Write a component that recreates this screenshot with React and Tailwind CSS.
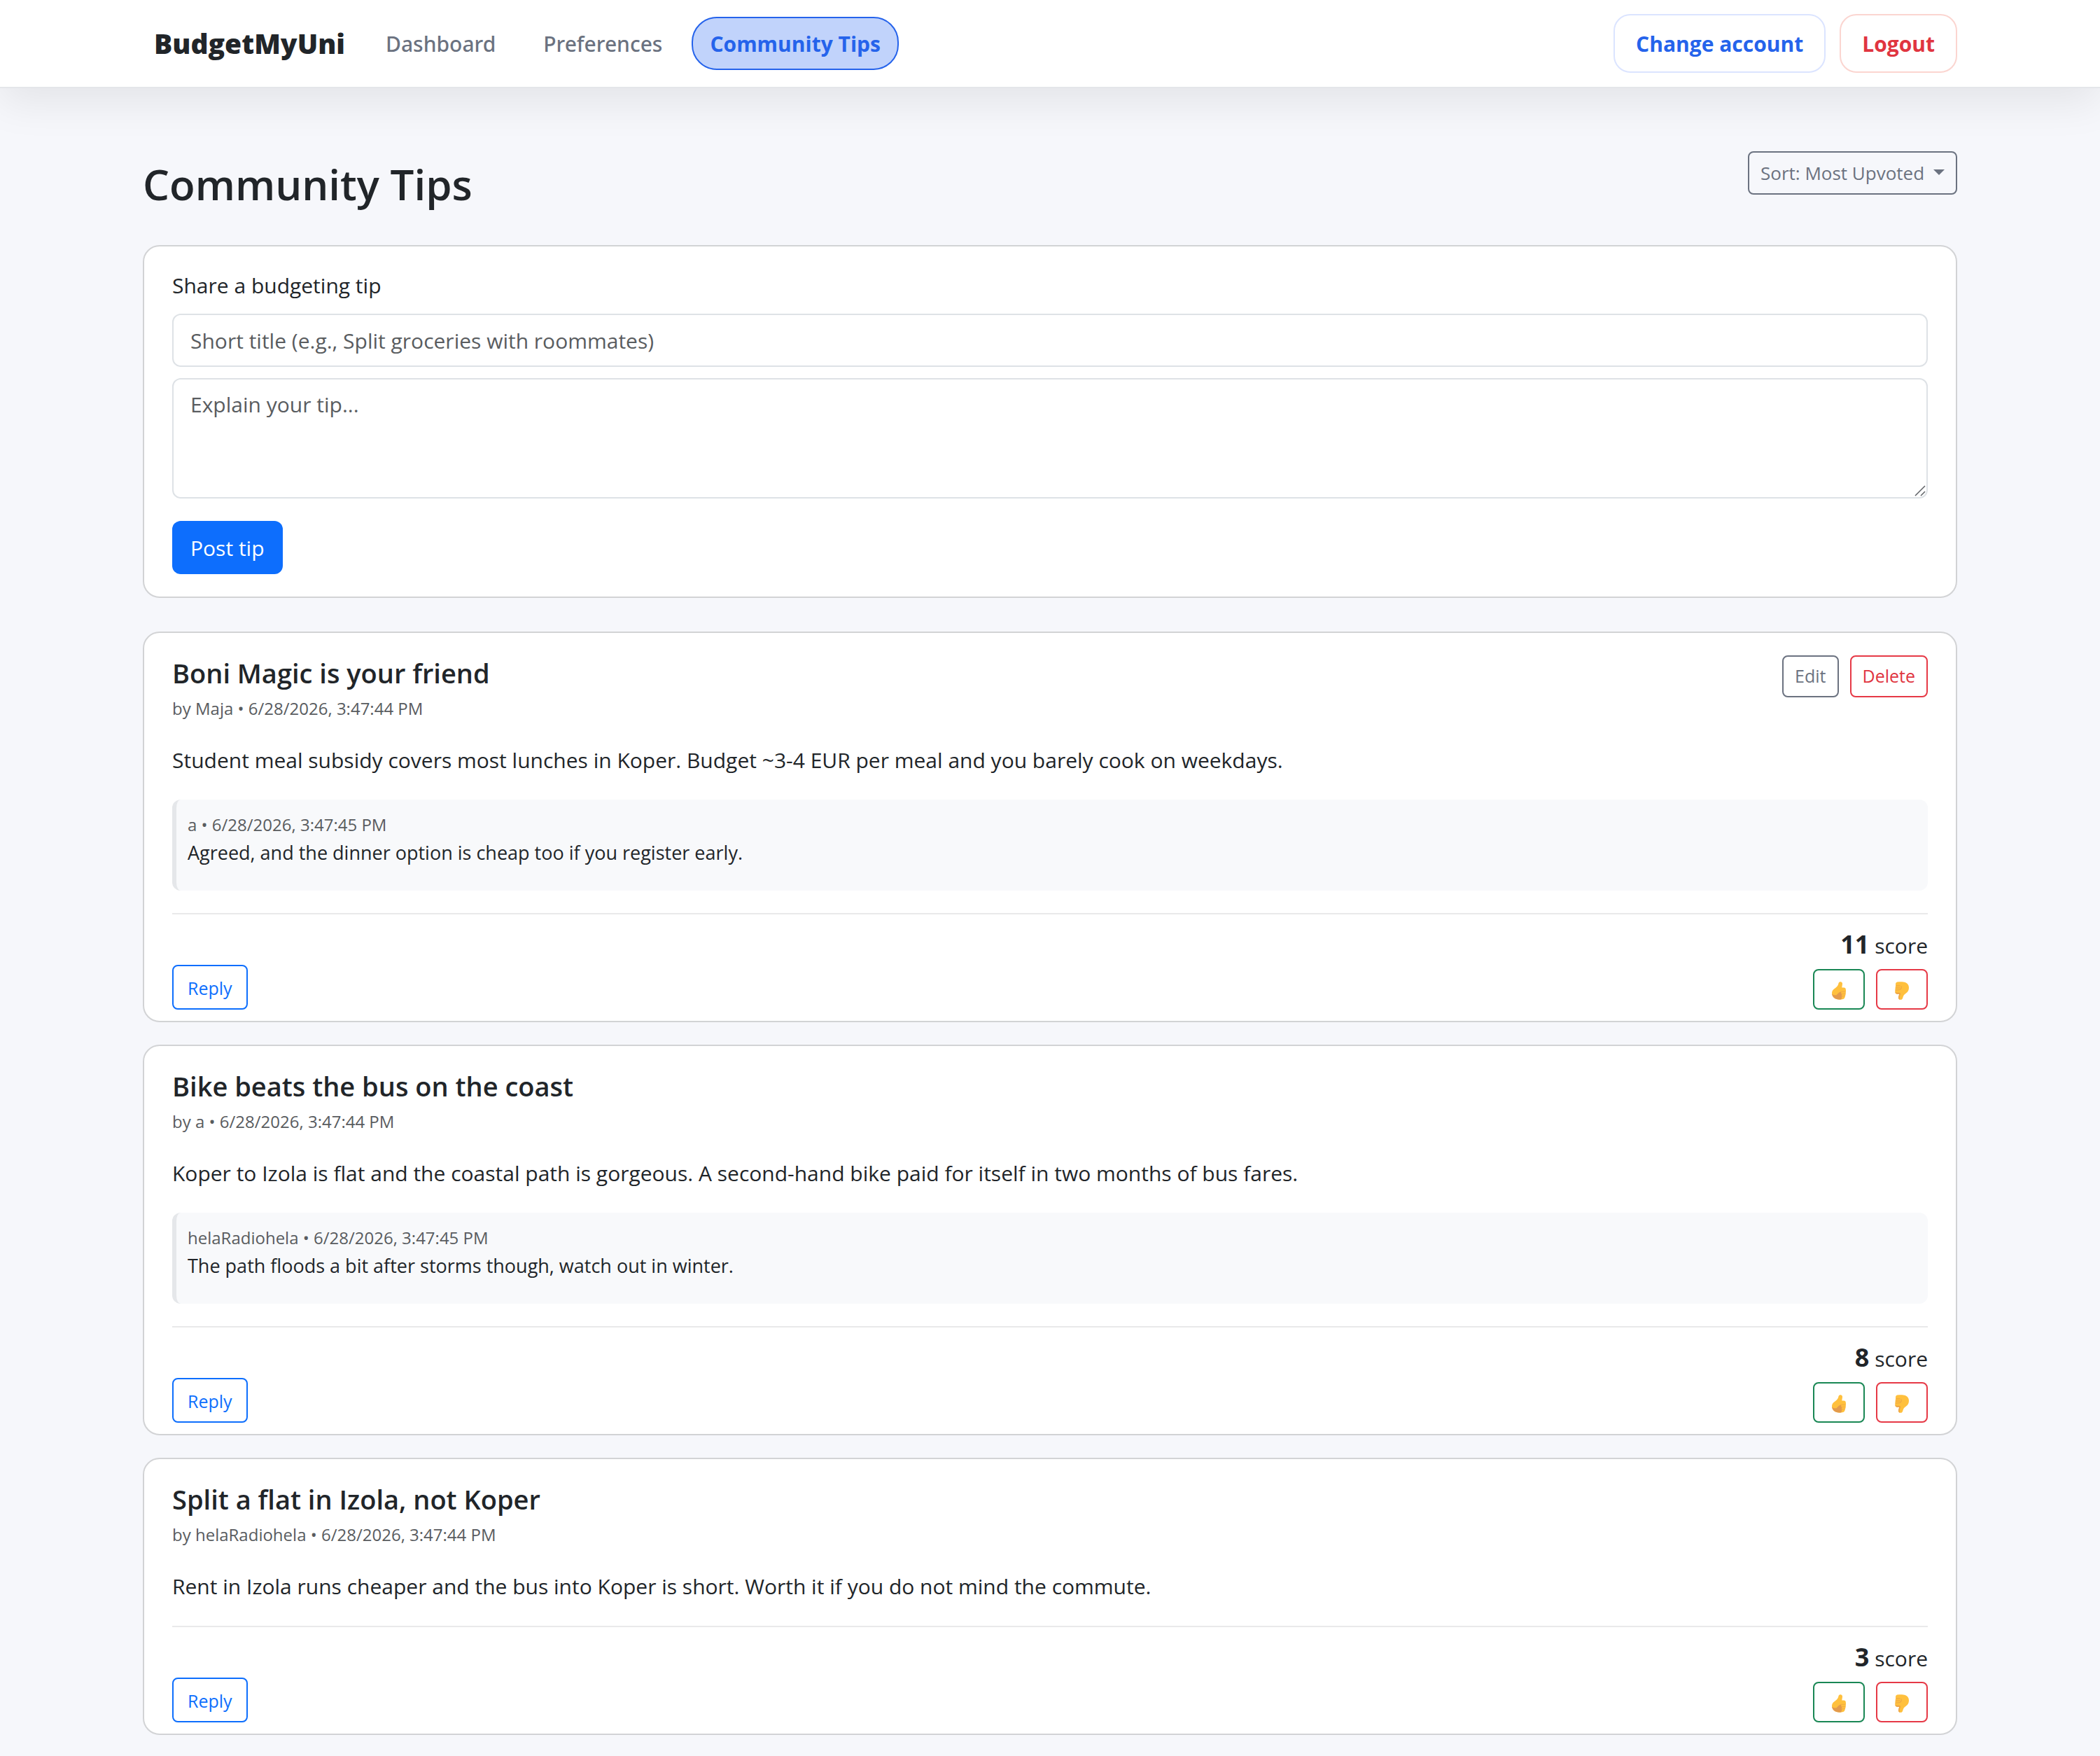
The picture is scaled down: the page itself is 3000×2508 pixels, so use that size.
import React, { useState } from 'react';

const NAV_LINKS = [
  { label: 'Dashboard', active: false },
  { label: 'Preferences', active: false },
  { label: 'Community Tips', active: true },
];

const TIPS = [
  {
    id: 1,
    title: 'Boni Magic is your friend',
    author: 'Maja',
    date: '6/28/2026, 3:47:44 PM',
    body: 'Student meal subsidy covers most lunches in Koper. Budget ~3-4 EUR per meal and you barely cook on weekdays.',
    score: 11,
    own: true,
    replies: [
      { author: 'a', date: '6/28/2026, 3:47:45 PM', text: 'Agreed, and the dinner option is cheap too if you register early.' },
    ],
  },
  {
    id: 2,
    title: 'Bike beats the bus on the coast',
    author: 'a',
    date: '6/28/2026, 3:47:44 PM',
    body: 'Koper to Izola is flat and the coastal path is gorgeous. A second-hand bike paid for itself in two months of bus fares.',
    score: 8,
    own: false,
    replies: [
      { author: 'helaRadiohela', date: '6/28/2026, 3:47:45 PM', text: 'The path floods a bit after storms though, watch out in winter.' },
    ],
  },
  {
    id: 3,
    title: 'Split a flat in Izola, not Koper',
    author: 'helaRadiohela',
    date: '6/28/2026, 3:47:44 PM',
    body: 'Rent in Izola runs cheaper and the bus into Koper is short. Worth it if you do not mind the commute.',
    score: 3,
    own: false,
    replies: [],
  },
];

const card = 'rounded-3xl border-2 border-[#d2d3d5] bg-white px-10';
const field = 'block w-full rounded-xl border-2 border-[#dee2e6] bg-white px-6 leading-[48px] text-[#212529] placeholder:text-[#595c5f]';

function ThumbUp() {
  return (
    <svg viewBox="0 0 20 26" className="h-[26px] w-5" aria-hidden="true">
      <path
        d="M11 .6C12.6-.3 15 .6 15 3c0 2-.8 4-.6 5.600H17c1.900 0 3 1.200 2.800 2.800.3 1 .3 2-.1 3 .3 1 .3 2.100-.2 3 .2 1.100 0 2.200-.7 3 0 2.600-1.200 4.600-3.800 4.900-3.300.6-7.700.5-10.300-1C1.800 22.700 0 20 0 16.600c0-3.100 1.400-5 3.800-6.700C6.500 8 8.600 6 9.300 3.200 9.500 2 10 1.100 11 .6Z"
        fill="#ffc03d"
      />
      <path
        d="M.1 17.500C1.500 19 4 19.500 6.500 19.300c1.500-1.600 3.200-3.700 5.300-4.600 1.400-.2 2 .8 1.400 2 1.300.7 1.500 2 .7 3 .9.900.8 2.200-.1 2.900.5.9.2 2-.7 2.600 1.100.2-1.600.3-3.300.2C4.700 25.200.8 22.500.1 17.500Z"
        fill="#e39a4c"
      />
      <path d="M12.500 14.400h6.600M13.400 17.500h5.600M13.400 20.600h5" stroke="#f0a648" strokeWidth="0.8" strokeLinecap="round" />
    </svg>
  );
}

function ThumbDown() {
  return (
    <svg viewBox="0 0 20 26" className="h-[26px] w-5" aria-hidden="true">
      <path
        d="M3.200.6C7 0 12 0 15.200 1.200 18.400 2.500 20 5.300 20 8.700c0 3.700-1.600 6-4.300 8-2.400 1.700-3.700 3.200-4.400 6.200-.4 1.800-1.300 2.900-2.900 2.900-2.100 0-3.600-1.300-3.400-3.400.2-1.700 1-3 1.100-4.700H3.300C1.500 17.700.3 16.600.4 15c-.3-1-.3-2.100.1-3-.3-1.100-.2-2.200.3-3-.3-1.100-.1-2.300.5-3.100C.6 3.500 1 1.300 3.200.6Z"
        fill="#ffc03d"
      />
      <path
        d="M1.100 12.100c2.300-.4 5.300.3 7.300-1.300M1.300 9h6M1.600 5.900h5.500M9 6.500c.8 1.500.6 3.200-.6 4.300"
        fill="none"
        stroke="#e8a04a"
        strokeWidth="0.9"
        strokeLinecap="round"
      />
      <path d="M.5 14.800c1.700 1.300 4.600.8 7.300 1.400.6 1.700-.6 3.600-1.100 5.600-.2 1.600 0 2.800.7 3.900-1.600-.3-2.600-1.500-2.400-3.300.2-1.700 1-3 1.100-4.700H3.300c-1.700 0-2.900-1.200-2.800-2.900Z" fill="#eca347" />
    </svg>
  );
}

function Navbar() {
  return (
    <header className="relative z-10 border-b-2 border-[#e4e6ea] bg-white shadow-[0_20px_60px_rgba(0,0,0,0.08)]">
      <div className="mx-auto flex h-[124px] max-w-[2592px] items-center">
        <a href="#" className="ml-4 mr-8 text-[39px] font-extrabold">BudgetMyUni</a>
        <nav className="flex gap-4 text-[30px]">
          {NAV_LINKS.map(link => (
            <a
              key={link.label}
              href="#"
              aria-current={link.active ? 'page' : undefined}
              className={
                link.active
                  ? 'flex h-[76px] items-center rounded-[36px] border-2 border-[#2563eb] bg-[#c1d3fb] px-6 font-bold text-[#2563eb]'
                  : 'flex h-[76px] items-center rounded-[36px] border-2 border-transparent px-6 font-["Noto_Sans",sans-serif] font-medium text-[#6b7280]'
              }
            >
              {link.label}
            </a>
          ))}
        </nav>
        <div className="ml-auto flex gap-5 text-[30px] font-bold">
          <button className="h-[84px] rounded-3xl border-2 border-[#dbe4ff] px-[30px] text-[#2563eb]">Change account</button>
          <button className="h-[84px] rounded-3xl border-2 border-[#fbd5d0] px-[30px] text-[#e03540]">Logout</button>
        </div>
      </div>
    </header>
  );
}

function SortSelect() {
  const [sort, setSort] = useState('top');
  return (
    <div className="relative">
      <select
        aria-label="Sort tips"
        value={sort}
        onChange={e => setSort(e.target.value)}
        className="h-[62px] appearance-none rounded-lg border-2 border-[#6b7280] bg-transparent pl-4 pr-11 text-[26px] text-[#6b7280]"
      >
        <option value="top">Sort: Most Upvoted</option>
        <option value="new">Sort: Newest</option>
      </select>
      {/* Caret */}
      <svg viewBox="0 0 16 8" className="pointer-events-none absolute right-[18px] top-[26px] h-2 w-4" aria-hidden="true">
        <path d="M0 0h16l-8 8Z" fill="#6b7280" />
      </svg>
    </div>
  );
}

function TipForm() {
  return (
    <form className={`${card} py-8`} onSubmit={e => e.preventDefault()}>
      <label htmlFor="tip-title" className="block leading-[48px]">Share a budgeting tip</label>
      <input id="tip-title" type="text" placeholder="Short title (e.g., Split groceries with roommates)" className={`${field} mt-4 h-[76px]`} />
      <div className="relative mt-4">
        <textarea aria-label="Tip" placeholder="Explain your tip..." className={`${field} h-[172px] resize-none py-3`} />
        {/* Resize grip */}
        <svg viewBox="0 0 16 16" className="pointer-events-none absolute bottom-[3px] right-[3px] h-4 w-4" aria-hidden="true">
          <path d="M1 15 15 1M9 15l6-6" stroke="#5f6166" strokeWidth="1.5" />
        </svg>
      </div>
      <button type="submit" className="mt-8 h-[76px] rounded-xl bg-[#0d6efd] px-[26px] text-white">Post tip</button>
    </form>
  );
}

function TipCard({ tip }) {
  return (
    <article className={`${card} pb-4 pt-8`}>
      <div className="flex items-start justify-between">
        <div>
          <h2 className="text-[38px] font-semibold leading-[50px]">{tip.title}</h2>
          <p className="mt-2 text-[24px] leading-[36px] text-[#595c5f]">by {tip.author} • {tip.date}</p>
        </div>
        {tip.own && (
          <div className="flex gap-4 text-[25px]">
            <button className="h-[60px] rounded-lg border-2 border-[#6b7280] px-4 text-[#6b7280]">Edit</button>
            <button className="h-[60px] rounded-lg border-2 border-[#e63946] px-4 text-[#e03540]">Delete</button>
          </div>
        )}
      </div>

      <p className="my-8 leading-[48px]">{tip.body}</p>

      {tip.replies.map(reply => (
        <div key={reply.text} className="mb-8 rounded-xl border-l-[6px] border-[#e5e7ea] bg-[#f8f9fb] px-4 pb-[34px] pt-4 leading-[40px]">
          <p className="text-[24px] text-[#595c5f]">{reply.author} • {reply.date}</p>
          <p className="text-[27px]">{reply.text}</p>
        </div>
      ))}

      <div className="flex items-end justify-between border-t-2 border-[#e9e9ea] pt-4">
        <button className="h-16 rounded-lg border-2 border-[#0d6efd] px-5 pt-1 text-[25px] text-[#0d6efd]">Reply</button>
        <div className="flex flex-col items-end gap-[6px]">
          <p className="leading-[54px]"><strong className="text-[36px]">{tip.score}</strong> score</p>
          <div className="flex gap-4">
            <button aria-label="Upvote" className="flex h-[58px] w-[74px] items-center justify-center rounded-lg border-2 border-[#198754] pt-1">
              <ThumbUp />
            </button>
            <button aria-label="Downvote" className="flex h-[58px] w-[74px] items-center justify-center rounded-lg border-2 border-[#e63946] pt-1">
              <ThumbDown />
            </button>
          </div>
        </div>
      </div>
    </article>
  );
}

export default function App() {
  return (
    <div className='min-h-screen bg-[#f6f7fb] font-["Open_Sans","Noto_Sans",sans-serif] text-[30px] text-[#212529]'>
      <Navbar />
      <main className="mx-auto max-w-[2592px] pb-8 pt-[90px]">
        <div className="mb-12 flex items-start justify-between">
          <h1 className="mt-2 text-[60px] font-semibold leading-[78px]">Community Tips</h1>
          <SortSelect />
        </div>
        <TipForm />
        <div className="mt-12 flex flex-col gap-8">
          {TIPS.map(tip => <TipCard key={tip.id} tip={tip} />)}
        </div>
      </main>
    </div>
  );
}
